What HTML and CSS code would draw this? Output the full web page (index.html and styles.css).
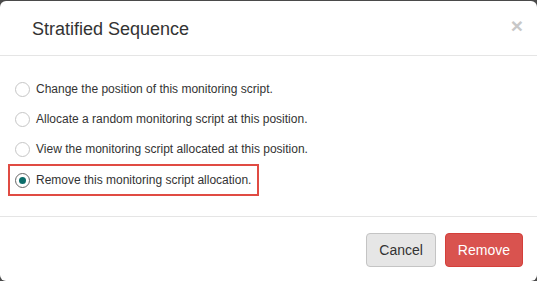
FILE: index.html
```html
<!DOCTYPE html>
<html lang="en">
<head>
    <meta charset="UTF-8">
    <title>Stratified Sequence</title>
    <link rel="stylesheet" href="styles.css">
</head>
<body>
    <div class="modal">
        <div class="modal-header">
            <h4 class="modal-title">Stratified Sequence</h4>
            <button class="close">&times;</button>
        </div>
        <div class="modal-body">
            <label class="option">
                <input type="radio" name="action">
                <span class="radio"></span>
                Change the position of this monitoring script.
            </label>
            <label class="option">
                <input type="radio" name="action">
                <span class="radio"></span>
                Allocate a random monitoring script at this position.
            </label>
            <label class="option">
                <input type="radio" name="action">
                <span class="radio"></span>
                View the monitoring script allocated at this position.
            </label>
            <label class="option highlight">
                <input type="radio" name="action" checked>
                <span class="radio"></span>
                Remove this monitoring script allocation.
            </label>
        </div>
        <div class="modal-footer">
            <button class="btn btn-default">Cancel</button>
            <button class="btn btn-danger">Remove</button>
        </div>
    </div>
</body>
</html>
```

FILE: styles.css
```css
body {
    margin: 0;
    background-color: #4a4a4a;
    font-family: "Liberation Sans", Arial, sans-serif;
    height: 281px;
    overflow: hidden;
}

.modal {
    margin-top: 1px;
    background: #fff;
    border-radius: 6px;
    height: 280px;
    display: flex;
    flex-direction: column;
}

.modal-header {
    display: flex;
    align-items: center;
    justify-content: space-between;
    height: 60px;
    padding: 0 14px 0 32px;
    border-bottom: 1px solid #e5e5e5;
}

.modal-title {
    margin: 0;
    font-size: 18px;
    font-weight: normal;
    color: #333;
    padding-top: 3px;
}

.close {
    border: none;
    background: none;
    padding: 0;
    font-family: "Liberation Sans", Arial, sans-serif;
    font-size: 21px;
    font-weight: bold;
    color: #c8c8c8;
    line-height: 1;
    margin-bottom: 6px;
}

.modal-body {
    padding: 18px 8px 20px 8px;
    display: flex;
    flex-direction: column;
    align-items: flex-start;
}

.option {
    display: flex;
    align-items: center;
    font-size: 12px;
    color: #333;
    height: 30px;
    padding: 0 7px;
    cursor: pointer;
}

.option input {
    display: none;
}

.radio {
    width: 13px;
    height: 13px;
    border: 1px solid #c6c6c6;
    border-radius: 50%;
    margin-right: 6px;
    position: relative;
    background: #fff;
}

.option input:checked + .radio {
    border-color: #666;
}

.option input:checked + .radio::after {
    content: "";
    position: absolute;
    left: 3px;
    top: 3px;
    width: 7px;
    height: 7px;
    border-radius: 50%;
    background: #0b6d6a;
}

.highlight {
    height: 28px;
    padding: 0 6px 0 5px;
    border: 2px solid #e04b43;
}

.modal-footer {
    border-top: 1px solid #e5e5e5;
    padding: 16px 14px 14px;
    display: flex;
    justify-content: flex-end;
    gap: 9px;
}

.btn {
    font-family: "Liberation Sans", Arial, sans-serif;
    font-size: 14px;
    height: 34px;
    padding: 0 12px;
    border-radius: 4px;
    border: 1px solid transparent;
    cursor: pointer;
}

.btn-default {
    background: #e6e6e6;
    border-color: #c4c4c4;
    color: #333;
}

.btn-danger {
    background: #d9534f;
    border-color: #d43f3a;
    color: #fff;
}
```
